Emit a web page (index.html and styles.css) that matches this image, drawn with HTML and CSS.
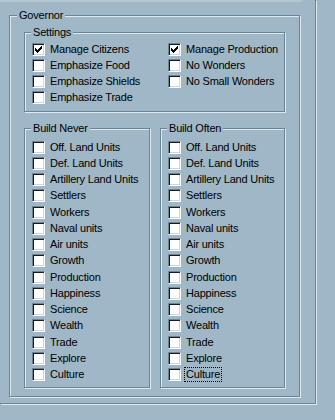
FILE: index.html
```html
<!DOCTYPE html>
<html>
<head>
<meta charset="utf-8">
<link rel="stylesheet" href="styles.css">
</head>
<body>
<div class="frame">
  <div class="topstrip"></div>
  <section class="group governor">
    <div class="legend">Governor</div>
    <section class="group settings">
      <div class="legend">Settings</div>
      <div class="settings-grid">
        <div class="list">
          <div class="row"><span class="cb checked"><svg width="7" height="7" viewBox="0 0 7 7"><rect x="0" y="2" width="1" height="3"/><rect x="1" y="3" width="1" height="3"/><rect x="2" y="4" width="1" height="3"/><rect x="3" y="3" width="1" height="3"/><rect x="4" y="2" width="1" height="3"/><rect x="5" y="1" width="1" height="3"/><rect x="6" y="0" width="1" height="3"/></svg></span><span class="lbl">Manage Citizens</span></div>
          <div class="row"><span class="cb"></span><span class="lbl">Emphasize Food</span></div>
          <div class="row"><span class="cb"></span><span class="lbl">Emphasize Shields</span></div>
          <div class="row"><span class="cb"></span><span class="lbl">Emphasize Trade</span></div>
        </div>
        <div class="list">
          <div class="row"><span class="cb checked"><svg width="7" height="7" viewBox="0 0 7 7"><rect x="0" y="2" width="1" height="3"/><rect x="1" y="3" width="1" height="3"/><rect x="2" y="4" width="1" height="3"/><rect x="3" y="3" width="1" height="3"/><rect x="4" y="2" width="1" height="3"/><rect x="5" y="1" width="1" height="3"/><rect x="6" y="0" width="1" height="3"/></svg></span><span class="lbl">Manage Production</span></div>
          <div class="row"><span class="cb"></span><span class="lbl">No Wonders</span></div>
          <div class="row"><span class="cb"></span><span class="lbl">No Small Wonders</span></div>
        </div>
      </div>
    </section>
    <div class="build-row">
      <section class="group build never">
        <div class="legend">Build Never</div>
        <div class="list build-list">
          <div class="row"><span class="cb"></span><span class="lbl">Off. Land Units</span></div>
          <div class="row"><span class="cb"></span><span class="lbl">Def. Land Units</span></div>
          <div class="row"><span class="cb"></span><span class="lbl">Artillery Land Units</span></div>
          <div class="row"><span class="cb"></span><span class="lbl">Settlers</span></div>
          <div class="row"><span class="cb"></span><span class="lbl">Workers</span></div>
          <div class="row"><span class="cb"></span><span class="lbl">Naval units</span></div>
          <div class="row"><span class="cb"></span><span class="lbl">Air units</span></div>
          <div class="row"><span class="cb"></span><span class="lbl">Growth</span></div>
          <div class="row"><span class="cb"></span><span class="lbl">Production</span></div>
          <div class="row"><span class="cb"></span><span class="lbl">Happiness</span></div>
          <div class="row"><span class="cb"></span><span class="lbl">Science</span></div>
          <div class="row"><span class="cb"></span><span class="lbl">Wealth</span></div>
          <div class="row"><span class="cb"></span><span class="lbl">Trade</span></div>
          <div class="row"><span class="cb"></span><span class="lbl">Explore</span></div>
          <div class="row"><span class="cb"></span><span class="lbl">Culture</span></div>
        </div>
      </section>
      <section class="group build often">
        <div class="legend">Build Often</div>
        <div class="list build-list">
          <div class="row"><span class="cb"></span><span class="lbl">Off. Land Units</span></div>
          <div class="row"><span class="cb"></span><span class="lbl">Def. Land Units</span></div>
          <div class="row"><span class="cb"></span><span class="lbl">Artillery Land Units</span></div>
          <div class="row"><span class="cb"></span><span class="lbl">Settlers</span></div>
          <div class="row"><span class="cb"></span><span class="lbl">Workers</span></div>
          <div class="row"><span class="cb"></span><span class="lbl">Naval units</span></div>
          <div class="row"><span class="cb"></span><span class="lbl">Air units</span></div>
          <div class="row"><span class="cb"></span><span class="lbl">Growth</span></div>
          <div class="row"><span class="cb"></span><span class="lbl">Production</span></div>
          <div class="row"><span class="cb"></span><span class="lbl">Happiness</span></div>
          <div class="row"><span class="cb"></span><span class="lbl">Science</span></div>
          <div class="row"><span class="cb"></span><span class="lbl">Wealth</span></div>
          <div class="row"><span class="cb"></span><span class="lbl">Trade</span></div>
          <div class="row"><span class="cb"></span><span class="lbl">Explore</span></div>
          <div class="row"><span class="cb"></span><span class="lbl focus">Culture</span></div>
        </div>
      </section>
    </div>
  </section>
</div>
</body>
</html>
```

FILE: styles.css
```css
* { box-sizing: border-box; }

html, body {
  margin: 0;
  padding: 0;
  background: #9fb7c6;
}

body {
  width: 335px;
  height: 420px;
  overflow: hidden;
  font-family: "Liberation Sans", Arial, sans-serif;
  font-size: 11px;
  letter-spacing: -0.2px;
  color: #000;
}

.frame {
  width: 316px;
  height: 404px;
  border-right: 1px solid #6a8596;
  border-bottom: 1px solid #6a8596;
  box-shadow: 1px 1px 0 #dde8ef;
  overflow: visible;
}

.topstrip {
  width: 302px;
  height: 2px;
  background: #b3c7d3;
}

.group {
  border: 1px solid #6a8596;
  box-shadow: 1px 1px 0 #dde8ef, inset 1px 1px 0 #dde8ef;
}

.legend {
  display: table;
  height: 13px;
  line-height: 13px;
  margin-top: -7px;
  padding: 0 2px;
  background: #9fb7c6;
  white-space: nowrap;
}

.governor {
  width: 291px;
  height: 382px;
  margin: 13px 0 0 9px;
}

.governor > .legend { margin-left: 7px; }

.settings {
  width: 261px;
  height: 80px;
  margin: 10px 0 0 14px;
}

.settings > .legend,
.build > .legend { margin-left: 6px; }

.settings-grid {
  display: grid;
  grid-template-columns: 136px auto;
  margin-top: 2px;
  padding-left: 7px;
}

.build-row {
  display: flex;
  gap: 10px;
  margin: 16px 0 0 14px;
}

.build {
  height: 260px;
}

.never { width: 126px; }
.often { width: 125px; }

.build-list {
  margin-top: 4px;
  padding-left: 7px;
}

.row {
  display: flex;
  align-items: center;
  height: 16.25px;
}

.cb {
  flex: none;
  width: 13px;
  height: 13px;
  margin-right: 3px;
  background: #fff;
  border-top: 1px solid #6a8596;
  border-left: 1px solid #6a8596;
  border-right: 1px solid #fff;
  border-bottom: 1px solid #fff;
  box-shadow: inset 1px 1px 0 #1a1a1a, inset -1px -1px 0 #c9d7df;
  display: flex;
  align-items: flex-start;
  justify-content: flex-start;
}

.cb svg {
  display: block;
  margin: 2px 0 0 2px;
  fill: #000;
}

.lbl {
  border: 1px dotted transparent;
  padding: 0 1px;
  line-height: 13px;
  white-space: nowrap;
}

.lbl.focus {
  border-color: #000;
}
```
